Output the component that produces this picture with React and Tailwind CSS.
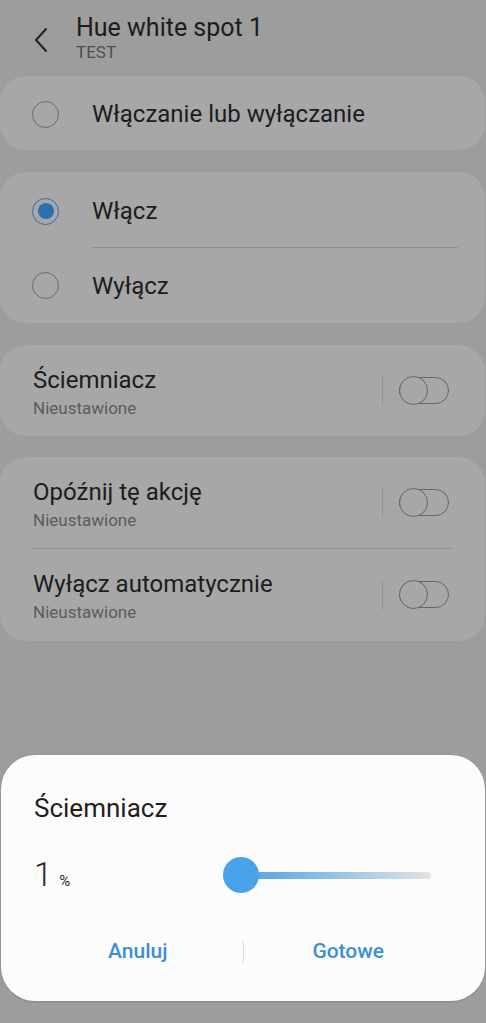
import React, { useState } from "react";

function Radio({ checked }) {
  return checked ? (
    <span className="flex h-[27px] w-[27px] shrink-0 items-center justify-center rounded-full border-[1.5px] border-[#2f6fa6]">
      <span className="h-[16px] w-[16px] rounded-full bg-[#2a70ad]" />
    </span>
  ) : (
    <span className="h-[27px] w-[27px] shrink-0 rounded-full border-[1.5px] border-[#6b6b6b]" />
  );
}

function Toggle() {
  return (
    <div className="flex items-center">
      <span className="mr-[16px] h-[30px] w-px bg-[#949494]" />
      <span className="relative h-[27px] w-[50px] rounded-full border-[1.5px] border-[#656565]">
        <span className="absolute -left-[1.5px] -top-[2px] h-[29px] w-[29px] rounded-full border-[1.5px] border-[#656565] bg-[#a7a7a7]" />
      </span>
    </div>
  );
}

function SettingRow({ title }) {
  return (
    <div className="flex h-[91px] items-center pl-[33px] pr-[36px]">
      <div className="flex-1 pt-[4px]">
        <div className="text-[24px] leading-[28px] text-[#1c1c1c]">{title}</div>
        <div className="mt-[3px] text-[17px] leading-[22px] text-[#5c5c5c]">Nieustawione</div>
      </div>
      <Toggle />
    </div>
  );
}

export default function App() {
  const [value] = useState(1);

  return (
    <div
      className="flex h-[1023px] w-[486px] flex-col overflow-hidden bg-[#9d9d9d]"
      style={{ fontFamily: "Roboto, 'Noto Sans', sans-serif" }}
    >
      {/* header */}
      <div className="flex h-[76px] items-start pl-[33px] pt-[12px]">
        <svg width="16" height="26" viewBox="0 0 16 26" className="mt-[15px]">
          <path d="M13 2 L3 13 L13 24" fill="none" stroke="#222" strokeWidth="2" strokeLinecap="round" strokeLinejoin="round" />
        </svg>
        <div className="ml-[27px]">
          <div className="text-[25px] leading-[31px] text-[#1c1c1c]">Hue white spot 1</div>
          <div className="-mt-[2px] text-[17px] leading-[22px] text-[#4e4e4e]">TEST</div>
        </div>
      </div>

      <div className="flex flex-col gap-[22px] pr-[1px]">
        <div className="flex h-[74px] items-center rounded-[26px] bg-[#a7a7a7] pl-[32px] pt-[2px]">
          <Radio />
          <span className="ml-[33px] text-[24px] text-[#1c1c1c]">Włączanie lub wyłączanie</span>
        </div>

        <div className="rounded-[26px] bg-[#a7a7a7]">
          <div className="flex h-[75px] items-center pl-[32px] pt-[3px]">
            <Radio checked />
            <span className="ml-[33px] text-[24px] text-[#1c1c1c]">Włącz</span>
          </div>
          <div className="ml-[92px] mr-[27px] h-px bg-[#919191]" />
          <div className="flex h-[75px] items-center pl-[32px]">
            <Radio />
            <span className="ml-[33px] text-[24px] text-[#1c1c1c]">Wyłącz</span>
          </div>
        </div>

        <div className="rounded-[26px] bg-[#a7a7a7]">
          <SettingRow title="Ściemniacz" />
        </div>

        <div className="-mt-[1px] rounded-[26px] bg-[#a7a7a7]">
          <SettingRow title="Opóźnij tę akcję" />
          <div className="ml-[33px] mr-[33px] h-px bg-[#919191]" />
          <div className="pb-[1px]">
            <SettingRow title="Wyłącz automatycznie" />
          </div>
        </div>
      </div>

      {/* dialog */}
      <div className="mx-[1px] mb-[22px] mt-auto h-[246px] rounded-[34px] bg-[#fcfcfc] px-[33px] pt-[37px] shadow-[0_1px_2px_rgba(0,0,0,0.15)]">
        <div className="text-[26px] leading-[32px] text-[#1f1f1f]">Ściemniacz</div>
        <div className="mt-[31px] flex h-[40px] items-center">
          <div className="flex w-[189px] items-baseline">
            <span className="text-[33px] font-light leading-[40px] text-[#2a2a2a]">{value}</span>
            <span className="ml-[7px] text-[15px] text-[#2a2a2a]">%</span>
          </div>
          <div className="relative flex h-[36px] flex-1 items-center pr-[21px]">
            <div className="ml-[18px] h-[7px] flex-1 rounded-full bg-[linear-gradient(to_right,#4aa3e9,#e2e2e2)]" />
            <span className="absolute left-0 top-0 h-[36px] w-[36px] rounded-full bg-[#4aa3ea]" />
          </div>
        </div>
        <div className="-mx-[33px] mt-[37px] flex h-[40px] items-center">
          <button className="flex-1 pl-[32px] text-center text-[21px] font-medium text-[#3c8fd2]">Anuluj</button>
          <span className="h-[22px] w-px bg-[#dcdcdc]" />
          <button className="flex-1 pr-[32px] text-center text-[21px] font-medium text-[#3c8fd2]">Gotowe</button>
        </div>
      </div>
    </div>
  );
}
